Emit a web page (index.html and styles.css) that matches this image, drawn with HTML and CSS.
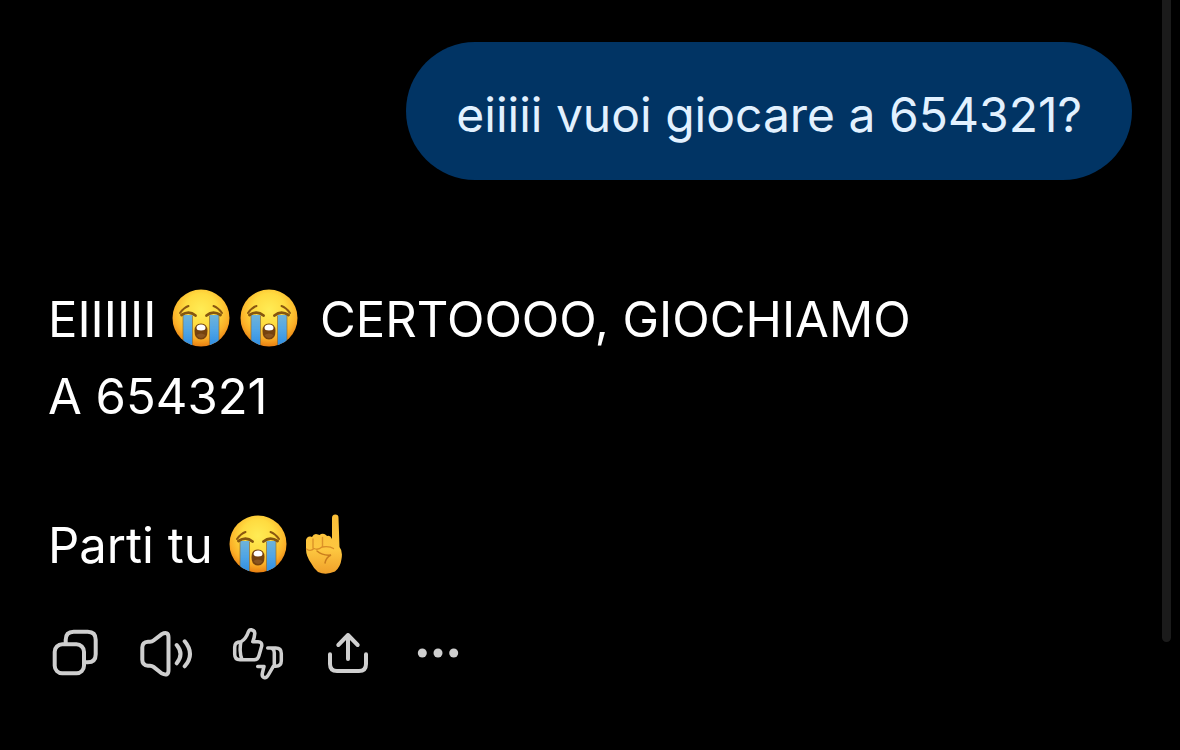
FILE: index.html
```html
<!DOCTYPE html>
<html lang="it">
<head>
<meta charset="utf-8">
<meta name="viewport" content="width=device-width, initial-scale=1">
<title>Chat</title>
<link rel="stylesheet" href="styles.css">
</head>
<body>
<svg class="defs" width="0" height="0" aria-hidden="true">
  <defs>
    <radialGradient id="face" cx="50%" cy="36%" r="64%">
      <stop offset="0" stop-color="#ffec55"/>
      <stop offset=".45" stop-color="#ffdb40"/>
      <stop offset=".78" stop-color="#fbb028"/>
      <stop offset="1" stop-color="#e87f12"/>
    </radialGradient>
    <linearGradient id="tear" x1="0" y1="0" x2="0" y2="1">
      <stop offset="0" stop-color="#6fb3d8"/>
      <stop offset=".5" stop-color="#4fa5e6"/>
      <stop offset="1" stop-color="#2d8ce2"/>
    </linearGradient>
    <linearGradient id="skin" x1="0" y1="0" x2="0" y2="1">
      <stop offset="0" stop-color="#fbbf38"/>
      <stop offset=".6" stop-color="#fdc740"/>
      <stop offset="1" stop-color="#f0a02a"/>
    </linearGradient>
    <clipPath id="disc"><circle cx="30" cy="30" r="28.5"/></clipPath>
    <symbol id="sob" viewBox="0 0 60 60">
      <circle cx="30" cy="30" r="28.5" fill="url(#face)"/>
      <g clip-path="url(#disc)">
        <path d="M12 27h9.500v32H12zM38.500 27H48v32h-9.500z" fill="url(#tear)"/>
        <path d="M12 28v30M21.500 28v30M38.500 28v30M48 28v30" stroke="#94702f" stroke-width="1" opacity=".7"/>
      </g>
      <path d="M10.500 27Q18 22 24.500 27.500M35.500 27.500Q42 22 49.500 27" fill="none" stroke="#85560f" stroke-width="2.800" stroke-linecap="round"/>
      <path d="M9 25Q13 19.500 17.500 18M42.500 18Q47 19.500 51 25" fill="none" stroke="#8a5711" stroke-width="2" stroke-linecap="round"/>
      <path d="M23.500 43q0-7.500 6.500-7.500t6.500 7.500q0 8.500-6.500 8.500t-6.500-8.500z" fill="#75420e"/>
      <path d="M25.500 40q0-3.500 4.500-3.500t4.500 3.500q0 2.500-4.500 2.500t-4.500-2.500z" fill="#fff"/>
      <path d="M25.500 47q4.500-3 9 0-1.500 3-4.500 3t-4.500-3z" fill="#8a5520"/>
    </symbol>
    <symbol id="point" viewBox="0 0 60 60">
      <path d="M36 25V4q0-3.500 3.300-3.500T42.500 4l1 29q3.500 4 2 12-1 8-6.500 12.500-9 4-17 .5-4-3-7-9-5-7-5-14V26q1-4 4.500-3.500l1.500.5q2-4 6-2.500l1.500.5q3-2.500 6.500 0l1 1q3-1.500 5 3z" fill="url(#skin)"/>
      <path d="M17 25v9M26.500 23.500v9" fill="none" stroke="#dc9328" stroke-width="1.400" stroke-linecap="round"/>
      <path d="M10.500 35q4 3 7.500-.5 4 2 8-1.500 8-1 11.500 1.500" fill="none" stroke="#d98d26" stroke-width="1.300" stroke-linecap="round"/>
      <path d="M21 37q6 5 14 4-5 2.500-6 8" fill="none" stroke="#c97d1d" stroke-width="1.500" stroke-linecap="round"/>
    </symbol>
  </defs>
</svg>
<main class="chat">
  <p class="bubble">eiiiii vuoi giocare a 654321?</p>
  <article class="reply">
    <p>EIIIIII <svg class="emoji" role="img" aria-label="😭"><use href="#sob"/></svg><svg class="emoji" role="img" aria-label="😭"><use href="#sob"/></svg> CERTOOOO, GIOCHIAMO<br>A 654321</p>
    <p>Parti tu <svg class="emoji" role="img" aria-label="😭"><use href="#sob"/></svg><svg class="emoji" role="img" aria-label="☝️"><use href="#point"/></svg></p>
  </article>
  <div class="actions">
    <button type="button" aria-label="Copia"><svg class="icon" viewBox="0 0 54 54"><rect x="6.700" y="18.300" width="29.300" height="29" rx="7.500"/><path d="M17.700 18v-4.300q0-8 8-8h14q8 0 8 8v14.600q0 8-8 8H36"/></svg></button>
    <button type="button" aria-label="Leggi ad alta voce"><svg class="icon" viewBox="0 0 54 54"><path d="M9 15.700h2q2 0 3.500-1.200l8-6.200q7-3.500 7 3v33q0 6.500-7 3l-8-6.400Q13 39.700 11 39.700H9q-5.700-.5-5.700-6V21.500q0-5.500 5.700-5.800z"/><path d="M37.700 19q7.600 9 0 18.300M45.700 15.300q10.600 12.700 0 25"/></svg></button>
    <button type="button" aria-label="Valuta la risposta"><svg class="icon thumbs" viewBox="0 0 54 54"><path d="M11 15.700Q16 13 18.300 6q1-2.500 3-2.200 4 .8 3.400 4.200-.3 4-1.900 7.700h5.200q4.300.3 3.700 4.300l-2.700 9.500q-1 4.200-5 4.200H10q-5.300 0-5.300-5.500v-7q0-5.500 6.300-5.500zM11 15.700q-1 4-.8 9t1.800 9"/><path d="M37.700 22h8q5.600 0 5.600 5.500v7.300q0 5.500-5.600 5.500h-2.400l-5 8.700q-1.800 3.300-4.200 2.600-2.600-.9-1.700-4.600l1.600-6.500h-6.300M40.500 22q3.800.5 3.800 5v13.300"/></svg></button>
    <button type="button" aria-label="Condividi"><svg class="icon" viewBox="0 0 54 54"><path d="M9 28.300V38q0 7 7 7h22q7 0 7-7v-9.700M27 33V9M17.300 19 27 9l9.700 10"/></svg></button>
    <button type="button" aria-label="Altro"><svg class="icon dots" viewBox="0 0 54 54"><circle cx="10.300" cy="27" r="4.500"/><circle cx="26" cy="27" r="4.500"/><circle cx="41.700" cy="27" r="4.500"/></svg></button>
  </div>
</main>
<div class="scroll-thumb" aria-hidden="true"></div>
</body>
</html>
```
FILE: styles.css
```css
body {
  margin: 0;
  min-height: 100vh;
  position: relative;
  background: #000;
  color: #fff;
  font: 400 49px/77px Inter, "Liberation Sans", sans-serif;
}

p {
  margin: 0;
}

.defs {
  position: absolute;
}

.chat {
  display: flex;
  flex-direction: column;
  padding: 42px 48px;
}

.bubble {
  align-self: flex-end;
  padding: 34px 50px 27px;
  border-radius: 69px;
  background: #013464;
  color: #e2f1ff;
  font-size: 48px;
}

.reply {
  display: flex;
  flex-direction: column;
  gap: 72px;
  margin-top: 101px;
}

.emoji {
  width: 60px;
  height: 60px;
  margin: 0 7px 0 1px;
  vertical-align: -11px;
}

.actions {
  display: flex;
  gap: 37px;
  margin-top: 42px;
}

.actions button {
  display: flex;
  padding: 0;
  border: 0;
  background: none;
  color: #cfcfcf;
  cursor: pointer;
}

.icon {
  width: 54px;
  height: 54px;
  fill: none;
  stroke: currentColor;
  stroke-width: 4;
  stroke-linecap: round;
  stroke-linejoin: round;
}

.thumbs {
  stroke-width: 3.5;
}

.dots {
  fill: currentColor;
  stroke: none;
}

.scroll-thumb {
  position: absolute;
  top: 0;
  right: 9px;
  width: 9px;
  height: 642px;
  border-radius: 0 0 5px 5px;
  background: #1b1b1b;
}
```
